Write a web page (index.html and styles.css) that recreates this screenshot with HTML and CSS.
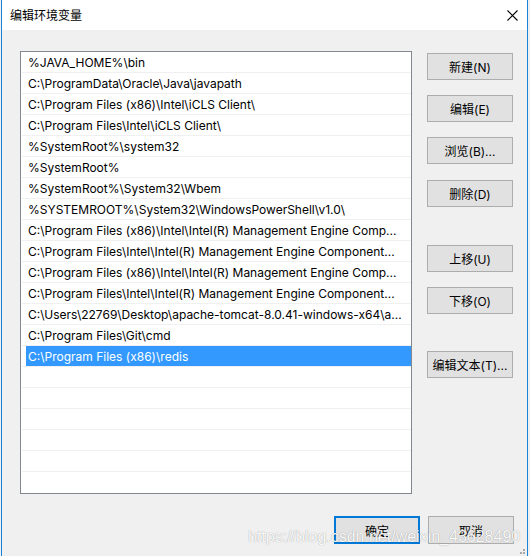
FILE: index.html
```html
<!DOCTYPE html>
<html lang="zh-CN">
<head>
<meta charset="utf-8">
<title>编辑环境变量</title>
<link rel="stylesheet" href="styles.css">
</head>
<body>
<div class="window">
  <div class="titlebar">
    <span class="title">编辑环境变量</span>
    <svg class="close" width="11" height="11" viewBox="0 0 11 11"><path d="M0.5 0.5 L10.5 10.5 M10.5 0.5 L0.5 10.5" stroke="#000" stroke-width="1.1" fill="none"/></svg>
  </div>
  <div class="content">
    <div class="main">
      <div class="list">
        <div class="row"><span class="cell">%JAVA_HOME%\bin</span></div>
        <div class="row"><span class="cell">C:\ProgramData\Oracle\Java\javapath</span></div>
        <div class="row"><span class="cell">C:\Program Files (x86)\Intel\iCLS Client\</span></div>
        <div class="row"><span class="cell">C:\Program Files\Intel\iCLS Client\</span></div>
        <div class="row"><span class="cell">%SystemRoot%\system32</span></div>
        <div class="row"><span class="cell">%SystemRoot%</span></div>
        <div class="row"><span class="cell">%SystemRoot%\System32\Wbem</span></div>
        <div class="row"><span class="cell">%SYSTEMROOT%\System32\WindowsPowerShell\v1.0\</span></div>
        <div class="row"><span class="cell">C:\Program Files (x86)\Intel\Intel(R) Management Engine Comp...</span></div>
        <div class="row"><span class="cell">C:\Program Files\Intel\Intel(R) Management Engine Component...</span></div>
        <div class="row"><span class="cell">C:\Program Files (x86)\Intel\Intel(R) Management Engine Comp...</span></div>
        <div class="row"><span class="cell">C:\Program Files\Intel\Intel(R) Management Engine Component...</span></div>
        <div class="row"><span class="cell">C:\Users\22769\Desktop\apache-tomcat-8.0.41-windows-x64\a...</span></div>
        <div class="row"><span class="cell">C:\Program Files\Git\cmd</span></div>
        <div class="row selected"><span class="cell">C:\Program Files (x86)\redis</span></div>
        <div class="row"><span class="cell"></span></div>
        <div class="row"><span class="cell"></span></div>
        <div class="row"><span class="cell"></span></div>
        <div class="row"><span class="cell"></span></div>
        <div class="row"><span class="cell"></span></div>
        <div class="row last"><span class="cell"></span></div>
      </div>
      <div class="side">
        <button class="btn">新建(N)</button>
        <button class="btn gap-s">编辑(E)</button>
        <button class="btn gap-s">浏览(B)...</button>
        <button class="btn gap-m">删除(D)</button>
        <button class="btn gap-l">上移(U)</button>
        <button class="btn gap-s">下移(O)</button>
        <button class="btn gap-l2">编辑文本(T)...</button>
      </div>
    </div>
    <div class="footer">
      <button class="btn wide default">确定</button>
      <button class="btn wide">取消</button>
    </div>
  </div>
  <div class="watermark">https://blog.csdn.net/weixin_43628490</div>
  <svg class="grip" width="8" height="8" viewBox="0 0 8 8"><rect x="6" y="2" width="2" height="2" fill="#a8a8a8"/><rect x="3" y="5" width="2" height="2" fill="#a8a8a8"/><rect x="6" y="5" width="2" height="2" fill="#a8a8a8"/></svg>
</div>
</body>
</html>
```

FILE: styles.css
```css
html, body {
  margin: 0;
  padding: 0;
  background: #f0f0f0;
  height: 556px;
  overflow: hidden;
}

body {
  font-family: Inter, "Noto Sans CJK SC", sans-serif;
  font-size: 12px;
  color: #000;
}

.window {
  position: relative;
  margin-left: 1px;
  width: 527px;
  height: 556px;
  box-sizing: border-box;
  border-left: 1px solid #1883d7;
  border-right: 1px solid #1883d7;
  background: #f0f0f0;
  overflow: hidden;
}

.titlebar {
  height: 30px;
  background: #fff;
  display: flex;
  align-items: center;
}

.title {
  margin-left: 8px;
  font-family: "Noto Sans CJK SC", sans-serif;
  font-size: 12px;
  line-height: 16px;
}

.close {
  margin-left: auto;
  margin-right: 9px;
  display: block;
}

.content {
  padding: 21px 13px 0 18px;
}

.main {
  display: flex;
  gap: 15px;
}

.list {
  width: 392px;
  box-sizing: border-box;
  border: 1px solid #828790;
  background: #fff;
  padding: 0;
}

.row {
  height: 21px;
  box-sizing: border-box;
  margin-left: 1px;
  border-bottom: 1px solid #f0f0f0;
  display: flex;
}

.row.last {
  border-bottom: 0;
}

.cell {
  display: block;
  flex: 1;
  margin-left: 4px;
  padding-left: 2px;
  height: 20px;
  line-height: 21px;
  white-space: nowrap;
  overflow: hidden;
  text-overflow: ellipsis;
}

.row.selected .cell {
  background: #3399ff;
  color: #fff;
}

.side {
  display: flex;
  flex-direction: column;
  width: 86px;
  padding-top: 2px;
}

.btn {
  width: 86px;
  height: 27px;
  box-sizing: border-box;
  border: 1px solid #adadad;
  background: #e1e1e1;
  font-family: Inter, "Noto Sans CJK SC", sans-serif;
  font-size: 12px;
  color: #000;
  padding: 0;
  margin: 0;
}

.gap-s { margin-top: 15px; }
.gap-m { margin-top: 16px; }
.gap-l { margin-top: 38px; }
.gap-l2 { margin-top: 37px; }

.footer {
  display: flex;
  justify-content: flex-end;
  gap: 8px;
  margin-top: 22px;
}

.btn.wide {
  height: 28px;
}

.btn.default {
  border: 2px solid #0078d7;
}

.watermark {
  position: absolute;
  left: 246px;
  top: 529px;
  font-family: "Liberation Sans", Arial, sans-serif;
  font-size: 16px;
  line-height: 16px;
  color: rgba(255, 255, 255, 0.95);
  text-shadow: 0 0 1px rgba(0, 0, 0, 0.4);
  white-space: nowrap;
}

.grip {
  position: absolute;
  right: 2px;
  bottom: 1px;
  display: block;
}
```
